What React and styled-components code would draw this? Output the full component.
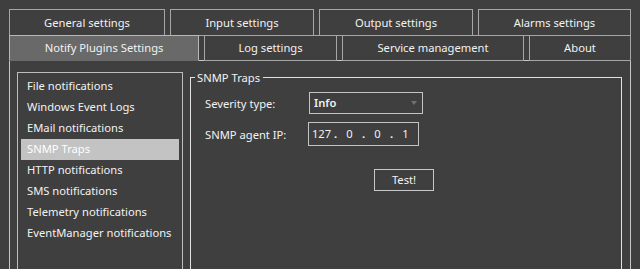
import React from "react";
import styled, { createGlobalStyle } from "styled-components";

const Global = createGlobalStyle`
  html, body {
    margin: 0;
    padding: 0;
    background: #3f3f3f;
    overflow: hidden;
  }
  body {
    font-family: "Noto Sans", "Open Sans", sans-serif;
    font-size: 11.2px;
    color: #f2f2f2;
  }
  * { box-sizing: border-box; }
`;

const Window = styled.div`
  width: 640px;
  height: 269px;
  padding: 9px 9px 0 9px;
  overflow: hidden;
`;

const TabBar = styled.div`
  display: flex;
  flex-direction: column;
`;

const TabRow = styled.div`
  display: flex;
  gap: 5px;
  margin-top: ${(p) => (p.$second ? "-1px" : "0")};
`;

const Tab = styled.div`
  position: relative;
  z-index: ${(p) => (p.$active ? 2 : 1)};
  width: ${(p) => p.$w}px;
  height: ${(p) => p.$h}px;
  display: flex;
  align-items: center;
  justify-content: center;
  border: 1px solid ${(p) => (p.$active ? "#b8b8b8" : "#a6a6a6")};
  border-bottom-color: ${(p) => (p.$active ? "#696969" : "#a6a6a6")};
  background: ${(p) => (p.$active ? "#696969" : "#3f3f3f")};
  color: #f2f2f2;
  white-space: nowrap;
  padding-bottom: 1px;
`;

const Pane = styled.div`
  margin-top: -1px;
  height: 240px;
  border: 1px solid #c6c6c6;
  padding: 11px 8px 0 7px;
  display: flex;
  gap: 7px;
  align-items: flex-start;
`;

const ListBox = styled.ul`
  list-style: none;
  margin: 0;
  width: 166px;
  height: 230px;
  flex: none;
  border: 1px solid #bdbdbd;
  padding: 3px;
`;

const ListItem = styled.li`
  height: 21px;
  line-height: 20px;
  padding-left: 6px;
  white-space: nowrap;
  background: ${(p) => (p.$selected ? "#c3c3c3" : "transparent")};
  color: ${(p) => (p.$selected ? "#ffffff" : "#f2f2f2")};
`;

const GroupBox = styled.fieldset`
  flex: 1;
  min-width: 0;
  margin: -2px 0 0 0;
  padding: 0;
  height: 230px;
  border: 1px solid #e2e2e2;
`;

const GroupTitle = styled.legend`
  margin-left: 4px;
  padding: 0 3px 0 2px;
  line-height: 15px;
  height: 15px;
  color: #f2f2f2;
`;

const GroupContent = styled.div`
  padding: 7px 0 0 14px;
`;

const Form = styled.div`
  display: grid;
  grid-template-columns: 103px auto;
  row-gap: 8px;
  align-items: center;
  justify-items: start;
`;

const Label = styled.span`
  white-space: nowrap;
`;

const Combo = styled.div`
  margin-left: 1px;
  width: 114px;
  height: 22px;
  border: 1px solid #c4c4c4;
  display: flex;
  align-items: center;
  justify-content: space-between;
  padding: 0 5px 1px 4px;
  font-weight: 600;
`;

const Arrow = styled.span`
  width: 0;
  height: 0;
  border-left: 3px solid transparent;
  border-right: 3px solid transparent;
  border-top: 4px solid #707070;
  margin-top: 1px;
`;

const IpBox = styled.div`
  width: 111px;
  height: 24px;
  border: 1px solid #c4c4c4;
  display: flex;
  align-items: center;
  padding-bottom: 1px;
`;

const IpField = styled.span`
  flex: 1;
  text-align: center;
`;

const IpDot = styled.span`
  width: 3px;
  text-align: center;
  font-weight: 700;
`;

const ButtonRow = styled.div`
  margin-top: 23px;
  padding-left: 169px;
`;

const Button = styled.button`
  width: 60px;
  height: 22px;
  border: 1px solid #c8c8c8;
  background: #3f3f3f;
  color: #f2f2f2;
  font-family: inherit;
  font-size: inherit;
  padding: 0 0 1px 0;
`;

const row1 = [
  { label: "General settings", w: 156 },
  { label: "Input settings", w: 144 },
  { label: "Output settings", w: 154 },
  { label: "Alarms settings", w: 153 },
];

const row2 = [
  { label: "Notify Plugins Settings", w: 190, active: true },
  { label: "Log settings", w: 133 },
  { label: "Service management", w: 182 },
  { label: "About", w: 102 },
];

const items = [
  "File notifications",
  "Windows Event Logs",
  "EMail notifications",
  "SNMP Traps",
  "HTTP notifications",
  "SMS notifications",
  "Telemetry notifications",
  "EventManager notifications",
];

export default function App() {
  const ip = ["127", "0", "0", "1"];
  return (
    <>
      <Global />
      <Window>
        <TabBar>
          <TabRow>
            {row1.map((t) => (
              <Tab key={t.label} $w={t.w} $h={27}>
                {t.label}
              </Tab>
            ))}
          </TabRow>
          <TabRow $second>
            {row2.map((t) => (
              <Tab key={t.label} $w={t.w} $h={26} $active={t.active}>
                {t.label}
              </Tab>
            ))}
          </TabRow>
        </TabBar>
        <Pane>
          <ListBox>
            {items.map((it) => (
              <ListItem key={it} $selected={it === "SNMP Traps"}>
                {it}
              </ListItem>
            ))}
          </ListBox>
          <GroupBox>
            <GroupTitle>SNMP Traps</GroupTitle>
            <GroupContent>
              <Form>
                <Label>Severity type:</Label>
                <Combo>
                  <span>Info</span>
                  <Arrow />
                </Combo>
                <Label>SNMP agent IP:</Label>
                <IpBox>
                  {ip.map((n, i) => (
                    <React.Fragment key={i}>
                      {i > 0 && <IpDot>.</IpDot>}
                      <IpField>{n}</IpField>
                    </React.Fragment>
                  ))}
                </IpBox>
              </Form>
              <ButtonRow>
                <Button>Test!</Button>
              </ButtonRow>
            </GroupContent>
          </GroupBox>
        </Pane>
      </Window>
    </>
  );
}
